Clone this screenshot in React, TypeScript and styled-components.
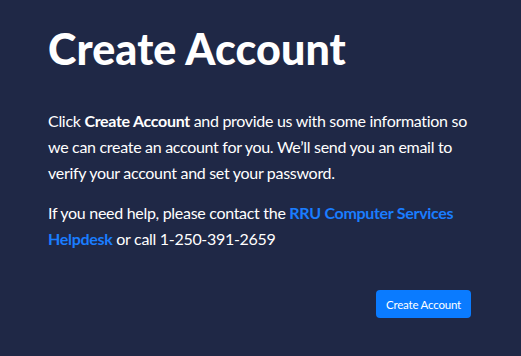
import React from "react";
import styled, { createGlobalStyle } from "styled-components";

const Global = createGlobalStyle`
  html, body { margin: 0; padding: 0; background: #1f2846; }
  body { font-family: "Lato", "Noto Sans", sans-serif; }
`;

const Page = styled.main`
  width: 521px;
  height: 356px;
  box-sizing: border-box;
  padding: 23px 48px 0 48px;
  background: #1f2846;
  color: #ffffff;
  display: flex;
  flex-direction: column;
`;

const Title = styled.h1`
  margin: 0 0 33px 0;
  font-size: 43px;
  font-weight: 900;
  line-height: 52px;
  letter-spacing: 0.1px;
`;

const Para = styled.p`
  margin: 0 0 14px 0;
  font-size: 16px;
  line-height: 26px;
  letter-spacing: -0.3px;
  width: 430px;
`;

const Link = styled.a`
  color: #1a7dff;
  font-weight: 700;
  text-decoration: none;
`;

const Actions = styled.div`
  display: flex;
  justify-content: flex-end;
  margin-top: 24px;
  margin-right: 2px;
`;

const Button = styled.button`
  background: #0a7bff;
  color: #ffffff;
  border: none;
  border-radius: 4px;
  height: 28px;
  width: 95px;
  padding: 0;
  font-family: "Lato", "Noto Sans", sans-serif;
  font-size: 11.5px;
  letter-spacing: -0.2px;
  cursor: pointer;
`;

export default function App() {
  return (
    <>
      <Global />
      <Page>
        <Title>Create Account</Title>
        <Para>
          Click <strong>Create Account</strong> and provide us with some information so we can
          create an account for you. We’ll send you an email to verify your account and set your
          password.
        </Para>
        <Para>
          If you need help, please contact the <Link href="#">RRU Computer Services Helpdesk</Link>{" "}
          or call 1-250-391-2659
        </Para>
        <Actions>
          <Button>Create Account</Button>
        </Actions>
      </Page>
    </>
  );
}
